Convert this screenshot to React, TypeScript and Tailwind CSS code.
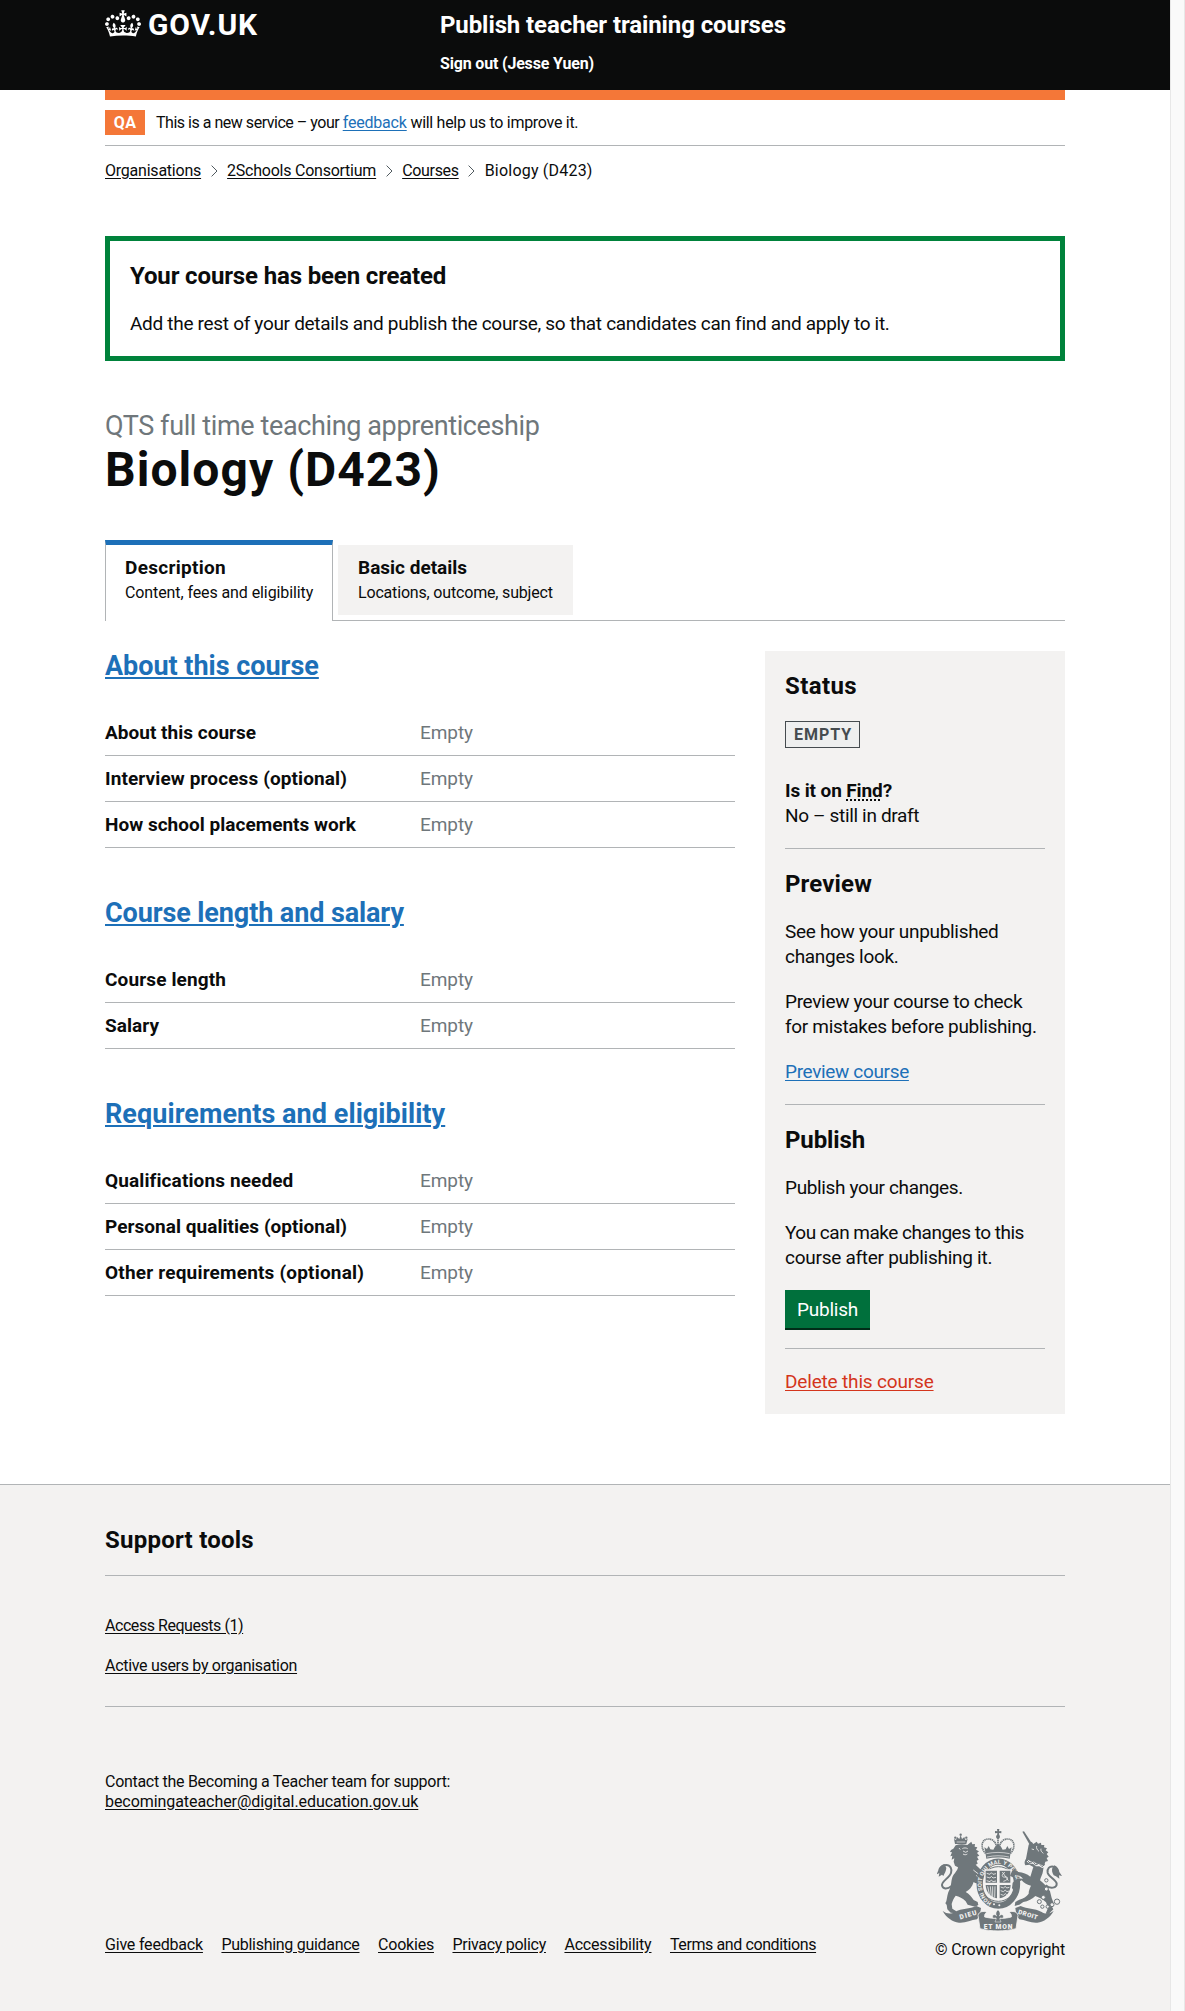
import type { ReactNode } from "react";

const INK = "#6f777b";

function CrownLogo() {
  return (
    <svg viewBox="0 0 132 97" className="h-[27px] w-9 shrink-0" fill="currentColor" aria-hidden="true">
      <path
        fillRule="evenodd"
        d="M25 30.2c3.5 1.5 7.7-.2 9.1-3.7 1.5-3.6-.2-7.8-3.9-9.2-3.6-1.4-7.6.3-9.1 3.9-1.4 3.5.3 7.5 3.9 9zM9 39.5c3.6 1.5 7.8-.2 9.2-3.7 1.5-3.6-.2-7.8-3.9-9.1-3.6-1.5-7.6.2-9.1 3.8-1.4 3.5.3 7.5 3.8 9zM4.4 57.2c3.5 1.5 7.7-.2 9.1-3.8 1.5-3.6-.2-7.7-3.9-9.1-3.5-1.5-7.6.3-9.1 3.8-1.4 3.5.3 7.6 3.9 9.1zm38.3-21.4c3.5 1.5 7.7-.2 9.1-3.8 1.5-3.6-.2-7.7-3.9-9.1-3.6-1.5-7.6.3-9.1 3.8-1.3 3.6.4 7.7 3.9 9.1zm64.4-5.6c-3.6 1.5-7.8-.2-9.1-3.7-1.5-3.6.2-7.8 3.8-9.2 3.6-1.4 7.7.3 9.2 3.9 1.3 3.5-.4 7.5-3.9 9zm15.9 9.3c-3.6 1.5-7.7-.2-9.1-3.7-1.5-3.6.2-7.8 3.7-9.1 3.6-1.5 7.7.2 9.2 3.8 1.5 3.5-.3 7.5-3.8 9zm4.7 17.7c-3.6 1.5-7.8-.2-9.2-3.8-1.5-3.6.2-7.7 3.9-9.1 3.6-1.5 7.7.3 9.2 3.8 1.3 3.5-.4 7.6-3.9 9.1zM89.3 35.8c-3.6 1.5-7.8-.2-9.2-3.8-1.4-3.6.2-7.7 3.9-9.1 3.6-1.5 7.7.3 9.2 3.8 1.4 3.6-.3 7.7-3.9 9.1zM69.7 17.7l8.9 4.7V9.3l-8.9 2.8c-.2-.3-.5-.6-.9-.9L72.4 0H59.6l3.5 11.2c-.3.3-.6.5-.9.9l-8.8-2.8v13.1l8.8-4.7c.3.3.6.7.9.9l-5 15.4v.1c-.2.8-.4 1.6-.4 2.4 0 4.1 3.1 7.5 7 8.1h.2c.3 0 .7.1 1 .1.4 0 .7 0 1-.1h.2c4-.6 7.1-4.1 7.1-8.1 0-.8-.1-1.7-.4-2.4V34l-5.1-15.4c.4-.2.7-.6 1-.9zM66 92.8c16.9 0 32.8 1.1 47.1 3.2 4-16.9 8.9-26.7 14-33.5l-9.6-3.4c1 4.9 1.1 7.2 0 10.2-1.5-1.4-3-4.3-4.2-8.7L108.6 76c2.8-2 5-3.2 7.5-3.3-4.4 9.4-10 11.9-13.6 11.2-4.3-.8-6.3-4.6-5.6-7.9 1-4.7 5.7-5.9 8-.5 4.3-8.7-3-11.4-7.6-8.8 7.1-7.2 7.9-13.5 2.1-21.1-8 6.1-8.1 12.3-4.5 20.8-4.7-5.4-12.1-2.5-9.5 6.2 3.4-5.2 7.9-2 7.2 3.1-.6 4.3-6.4 7.8-13.5 7.2-10.3-.9-10.9-8-11.2-13.8 2.5-.5 7.1 1.8 11 7.3L80.2 60c-4.1 4.4-8 5.3-12.3 5.4 1.4-4.4 8-11.6 8-11.6H55.5s6.4 7.2 7.9 11.6c-4.2-.1-8-1-12.3-5.4l1.4 16.4c3.9-5.5 8.5-7.7 10.9-7.3-.3 5.8-.9 12.8-11.1 13.8-7.2.6-12.9-2.9-13.5-7.2-.7-5 3.8-8.3 7.1-3.1 2.7-8.7-4.6-11.6-9.4-6.2 3.7-8.5 3.6-14.7-4.6-20.8-5.8 7.6-5 13.9 2.2 21.1-4.7-2.6-11.9.1-7.7 8.8 2.3-5.5 7.1-4.2 8.1.5.7 3.3-1.3 7.1-5.7 7.9-3.5.7-9-1.8-13.5-11.2 2.5.1 4.7 1.3 7.5 3.3l-4.7-15.4c-1.2 4.4-2.7 7.2-4.3 8.7-1.1-3-.9-5.3 0-10.2l-9.5 3.4c5 6.9 9.9 16.7 14 33.5 14.8-2.1 30.8-3.2 47.7-3.2z"
      />
    </svg>
  );
}

function Crest() {
  const paper = "#f3f2f1";
  return (
    <svg viewBox="66 57 375 306" className="h-[102px] w-[125px]" fill={INK} aria-hidden="true">
      {/* lion's crown */}
      <path d="M120 102l-3-15 6 3 3-9 7 6 4-12 4 12 7-6 3 9 7-3-4 15z" />
      <circle cx="137" cy="74" r="3.5" />
      <circle cx="121" cy="83" r="3.5" />
      <circle cx="154" cy="83" r="3.5" />
      <path d="M125 96h26" stroke={paper} strokeWidth="2" />
      {/* lion's head, mane and body */}
      <path d="M122 106c10-4 24-4 35-1l12-10 3 8 8-1-1 8 8 2-4 7 9 5-6 5 7 8-7 3 5 9-6 3 3 9-6 3 14 14 12 10-4 10-14-5 2 8 14 18-4 8-14-8c-4 2-8 0-12-3-5 15-13 24-24 30 10 5 18 16 24 24l12 6 2 9-10 5-22-6-6-10c-8-9-20-15-30-17-6 8-10 16-12 25l2 14 12 8-1 6-16-2-10-10-2-14c-5-2-4-6-1-10 3-12 3-24 10-36 5-10 4-24 8-36 5-12 15-18 17-30l-9-5-4-12 2-10-8 4 2-12-6 2 5-12-6-1c2-6 6-9 10-10z" />
      <path d="M142 116c5-3 11-3 16 0M144 123l8 4 7-4M132 114l4 5M144 132c4 3 9 3 13 0M175 180l18 14M184 196l12 14" stroke={paper} strokeWidth="2.5" fill="none" />
      {/* lion's tail */}
      <path
        d="M110 228c-14 11-27 9-29-2-2-12 22-22 27-37 4-12-2-24-14-24-9 0-16 6-18 13"
        fill="none"
        stroke={INK}
        strokeWidth="6"
      />
      <path d="M89 163c-10 2-18 10-19 18l-5 12 8-4-2 11 10-6 4 4c4-8 8-14 9-24z" />
      {/* imperial crown */}
      <path d="M246 57h7l-1 7 7-1v7l-7-1 1 8h-7l1-8-7 1v-7l7 1z" />
      <circle cx="249" cy="80" r="6" />
      <path
        d="M212 130c-16-14-14-42 6-43 14-1 24 8 27 24M286 130c16-14 14-42-6-43-14-1-24 8-27 24M249 84v42"
        fill="none"
        stroke={INK}
        strokeWidth="5"
        strokeDasharray="4 1.6"
      />
      <path d="M211 126l-3-14 8 5 5-9 5 10 9 1 5-9 9-8 9 8 5 9 9-1 5-10 5 9 8-5-3 14-3 20c-22-5-48-5-70 0z" />
      <path d="M214 131c23-5 47-5 70 0M216 141c22-5 44-5 66 0" fill="none" stroke={paper} strokeWidth="2" />
      {/* garter and shield */}
      <circle cx="250" cy="222" r="52" fill={paper} stroke={INK} strokeWidth="3" />
      <ellipse cx="250" cy="221" rx="56" ry="66" fill="none" stroke={INK} strokeWidth="19" />
      <path id="garter" d="M232 279A52 61 0 1 1 272 279" fill="none" />
      <text fontFamily="Roboto" fontWeight="700" fontSize="17" fill={paper} letterSpacing="0.4">
        <textPath href="#garter" startOffset="2">HONI SOIT QUI MAL Y PENSE</textPath>
      </text>
      <circle cx="237" cy="283" r="3" fill={paper} />
      <circle cx="253" cy="286" r="3" fill={paper} />
      <path d="M208 178h83v44c0 27-16 44-41 49-26-5-42-22-42-49z" fill={paper} />
      <path d="M212 182h34v36h-34zM254 182h32v36h-32zM212 225h34v40c-20-4-33-18-34-40zM254 225h33c-1 22-13 36-33 40z" />
      <path d="M215 190l10 3 4-5 5 5 9-2M215 201l10 3 4-5 5 5 9-2M215 212l10 3 4-5 5 5 9-2M257 231l8 3 6-5 4 5 8-2M257 242l8 3 6-5 4 5 8-2M257 253l8 3 6-5 4 3M270 187c-12 6-10 16 0 14 12-2 10 10-5 13M262 186l18 26M218 229l6 28M226 229l3 32M233 229v34M240 229l-1 34" fill="none" stroke={paper} strokeWidth="2.4" />
      {/* unicorn */}
      <path d="M322 65l5-1 25 38-7 4z" />
      <path d="M341 104l9-9 5 7 10-7 4 6 9-3 1 7 9 0-1 7 9 3-4 6 8 6-5 5 6 8-6 4 4 9-8 2c-2 8-6 17-7 28-1 10-7 18-9 28 12 9 22 20 30 33l5 20 6 16-5 10 4 8-14 14-9-1 7-18-6-16c-9-9-20-15-32-19-8 9-22 16-36 18l-12 8-14 4 2-12 12-7c12-3 22-9 28-18 0-9 3-16 7-24-13-3-22-9-28-16l-12 6-8 12 6 12-7 6-8-13 2-16 15-13 16 1c-5-7-15-12-23-12l-8 8-8-5 6-14 9-4 10 7c14 1 26 6 36 14 4-12 6-20 9-29l-12-7-12 2c-4-7-2-14 2-20z" />
      <path d="M337 152l10 6 8 0 9 7 9 0 9 5 10-3" stroke={paper} strokeWidth="7" fill="none" />
      <path d="M336 150l9 9 9-5 8 11 10-5 9 10 9-7" stroke={INK} strokeWidth="3" fill="none" />
      <path d="M350 117l7 2M365 108c-2 7 2 12 7 16M378 116c-2 6 2 10 7 14" stroke={paper} strokeWidth="2.5" fill="none" />
      <path
        d="M392 226c14 12 34 8 33-5-1-12-24-20-27-33-2-12 5-20 17-18 9 2 13 10 14 18"
        fill="none"
        stroke={INK}
        strokeWidth="6"
      />
      <path d="M418 166c10 4 14 13 15 20l8 12-9-2 1 10-10-7-7-3c-5-8-6-16-4-22z" />
      <g fill={paper} stroke={INK} strokeWidth="3">
        <circle cx="394" cy="211" r="5" />
        <circle cx="394" cy="237" r="6" />
        <circle cx="385" cy="262" r="6" />
        <circle cx="373" cy="275" r="6" />
        <circle cx="382" cy="290" r="5" />
        <circle cx="398" cy="290" r="5" />
        <circle cx="411" cy="284" r="6" />
        <circle cx="426" cy="275" r="8" />
      </g>
      {/* motto ribbon */}
      <path d="M83 303c12 9 25 10 36 3 22-12 45-8 65-18l14 6c-2 14-4 26-12 34-18 2-36 12-54 10-20-3-37-14-49-35z" />
      <path d="M416 303c-12 9-25 10-36 3-22-12-43-8-63-18l-16 6c2 14 4 26 12 34 18 2 36 12 54 10 20-3 37-14 49-35z" />
      <path d="M189 316c2-12 18-14 27-9-6 3-8 8-7 14 26 6 56 6 80 0 1-6-1-11-7-14 9-5 25-3 27 9l-6 40c-34 9-74 9-108 0z" stroke={paper} strokeWidth="2.5" />
      <g fontFamily="Roboto" fontWeight="900" fontSize="20" fill={paper} textAnchor="middle">
        <text transform="translate(161 321) rotate(-16)" textLength="52">DIEU</text>
        <text x="249" y="356" textLength="86">ET MON</text>
        <text transform="translate(337 320) rotate(17)" fontSize="19" textLength="60">DROIT</text>
      </g>
      {/* fleur-de-lis */}
      <path d="M249 299c7 7 8 12 4 19 6-7 13-4 12 2 0 5-5 6-8 3l-3 3 4 10h-18l4-10-3-3c-3 3-8 2-8-3-1-6 6-9 12-2-4-7-3-12 4-19z" stroke={paper} strokeWidth="1.5" />
    </svg>
  );
}

function Chevron() {
  return (
    <svg viewBox="0 0 7 12" className="h-3 w-[7px]" fill="none" stroke="#505a5f" aria-hidden="true">
      <path d="M.6.6 6 6 .6 11.4" />
    </svg>
  );
}

function Rule() {
  return <hr className="my-5 border-t border-[#b1b4b6]" />;
}

type Row = { label: string; tracking: string };

function Section({ title, tracking, rows }: { title: string; tracking: string; rows: Row[] }) {
  return (
    <section className="mb-[50px]">
      <h2 className="mb-[29px] text-[27px] leading-[30px] font-bold text-[#1d70b8]">
        <a className={`underline decoration-2 underline-offset-[2px] ${tracking}`}>{title}</a>
      </h2>
      <dl>
        {rows.map((r) => (
          <div key={r.label} className="grid grid-cols-2 border-b border-[#b1b4b6] py-2.5">
            <dt className={`font-bold ${r.tracking}`}>{r.label}</dt>
            <dd className="tracking-[-0.004em] text-[#6f777b]">Empty</dd>
          </div>
        ))}
      </dl>
    </section>
  );
}

const SECTIONS: { title: string; tracking: string; rows: Row[] }[] = [
  {
    title: "About this course",
    tracking: "tracking-[-0.001em]",
    rows: [
      { label: "About this course", tracking: "tracking-[0.001em]" },
      { label: "Interview process (optional)", tracking: "tracking-[0.006em]" },
      { label: "How school placements work", tracking: "tracking-[0.001em]" },
    ],
  },
  {
    title: "Course length and salary",
    tracking: "tracking-[-0.004em]",
    rows: [
      { label: "Course length", tracking: "tracking-[0.007em]" },
      { label: "Salary", tracking: "tracking-[0.002em]" },
    ],
  },
  {
    title: "Requirements and eligibility",
    tracking: "tracking-[0.002em]",
    rows: [
      { label: "Qualifications needed", tracking: "tracking-[0.006em]" },
      { label: "Personal qualities (optional)", tracking: "tracking-[0.002em]" },
      { label: "Other requirements (optional)", tracking: "tracking-[0.010em]" },
    ],
  },
];

const FOOTER_LINKS = [
  { label: "Give feedback", tracking: "tracking-[-0.012em]" },
  { label: "Publishing guidance", tracking: "tracking-[-0.018em]" },
  { label: "Cookies", tracking: "tracking-[-0.013em]" },
  { label: "Privacy policy", tracking: "tracking-[-0.018em]" },
  { label: "Accessibility", tracking: "tracking-[-0.012em]" },
  { label: "Terms and conditions", tracking: "tracking-[-0.025em]" },
];

function Container({ children, className = "" }: { children: ReactNode; className?: string }) {
  return <div className={`mx-auto w-[960px] ${className}`}>{children}</div>;
}

function SideHeading({ children, tracking }: { children: ReactNode; tracking: string }) {
  return <h2 className={`mb-5 text-2xl leading-[30px] font-bold ${tracking}`}>{children}</h2>;
}

export default function App() {
  return (
    <div className="flex h-[2011px] bg-white font-['Roboto',sans-serif] text-[19px] leading-[25px] text-[#0b0c0c]">
      <div className="flex w-[1170px] shrink-0 flex-col">
        <header className="h-[90px] bg-[#0b0c0c] text-white">
          <Container className="flex pt-2.5">
            <div className="flex w-[335px] items-start gap-[7px]">
              <CrownLogo />
              <span className="text-[30px] leading-[30px] font-bold tracking-[0.029em]">GOV.UK</span>
            </div>
            <div className="font-bold">
              <div className="text-2xl leading-[30px] tracking-[-0.004em]">Publish teacher training courses</div>
              <a className="mt-3.5 block text-base leading-5 tracking-[-0.011em]">Sign out (Jesse Yuen)</a>
            </div>
          </Container>
        </header>

        <Container>
          <div className="h-2.5 bg-[#f47738]" />
          <div className="flex border-b border-[#b1b4b6] py-2.5 text-base leading-[25px]">
            <strong className="mr-[11px] w-10 bg-[#f47738] text-center font-bold tracking-[0.03em] text-white">QA</strong>
            <p className="whitespace-pre">
              <span className="tracking-[-0.030em]">This is a new service – your </span>
              <a className="tracking-[-0.012em] text-[#1d70b8] underline underline-offset-2">feedback</a>
              <span className="tracking-[-0.018em]"> will help us to improve it.</span>
            </p>
          </div>
          <nav className="mt-[15px] flex items-center gap-[9.5px] text-base leading-5">
            <a className="tracking-[-0.014em] underline underline-offset-2">Organisations</a>
            <Chevron />
            <a className="tracking-[-0.015em] underline underline-offset-2">2Schools Consortium</a>
            <Chevron />
            <a className="tracking-[-0.020em] underline underline-offset-2">Courses</a>
            <Chevron />
            <span className="tracking-[0.013em]">Biology (D423)</span>
          </nav>

          <div className="mt-[55px] border-5 border-[#00823b] p-5">
            <h2 className="mb-5 text-2xl leading-[30px] font-bold tracking-[-0.006em]">Your course has been created</h2>
            <p className="tracking-[-0.016em]">
              Add the rest of your details and publish the course, so that candidates can find and apply to it.
            </p>
          </div>

          <h1 className="mt-[50px]">
            <span className="block text-[27px] leading-[30px] tracking-[-0.014em] text-[#6f777b]">
              QTS full time teaching apprenticeship
            </span>
            <span className="block text-5xl leading-[57px] font-bold tracking-[0.022em]">Biology (D423)</span>
          </h1>

          <div className="mt-[42px] flex items-start gap-[5px] border-b border-[#b1b4b6]">
            <a className="-mb-px h-[81px] w-[228px] border-x border-t-5 border-x-[#b1b4b6] border-t-[#1d70b8] bg-white pt-2.5 pl-[19px]">
              <strong className="block font-bold tracking-[0.015em]">Description</strong>
              <span className="mt-[3px] block text-base leading-5 tracking-[-0.006em]">Content, fees and eligibility</span>
            </a>
            <a className="mt-[5px] h-[70px] w-[235px] bg-[#f3f2f1] pt-2.5 pl-5">
              <strong className="block font-bold">Basic details</strong>
              <span className="mt-[3px] block text-base leading-5 tracking-[-0.011em]">Locations, outcome, subject</span>
            </a>
          </div>

          <div className="mt-[30px] flex items-start gap-[30px]">
            <main className="w-[630px]">
              {SECTIONS.map((s) => (
                <Section key={s.title} {...s} />
              ))}
            </main>

            <aside className="w-[300px] bg-[#f3f2f1] p-5">
              <SideHeading tracking="tracking-[0.016em]">Status</SideHeading>
              <div className="flex">
                <strong className="flex h-[27px] w-[75px] items-center justify-center border border-[#454b4f] bg-[#eeefef] pl-px text-base leading-4 font-bold tracking-[0.059em] text-[#454b4f]">
                  EMPTY
                </strong>
              </div>
              <div className="mt-[30px]">
                <strong className="block font-bold tracking-[-0.006em]">
                  Is it on{" "}
                  <abbr className="no-underline">
                    <span className="underline decoration-dotted decoration-[2px] underline-offset-2">Find</span>
                  </abbr>
                  ?
                </strong>
                <span className="block tracking-[-0.018em]">No – still in draft</span>
              </div>
              <Rule />
              <SideHeading tracking="tracking-[0.006em]">Preview</SideHeading>
              <p className="tracking-[-0.016em]">
                See how your unpublished
                <br />
                changes look.
              </p>
              <p className="mt-5 tracking-[-0.017em]">
                Preview your course to check
                <br />
                for mistakes before publishing.
              </p>
              <p className="mt-5 tracking-[-0.018em]">
                <a className="text-[#1d70b8] underline underline-offset-2">Preview course</a>
              </p>
              <Rule />
              <SideHeading tracking="tracking-[-0.005em]">Publish</SideHeading>
              <p className="tracking-[-0.019em]">Publish your changes.</p>
              <p className="mt-5">
                <span className="block tracking-[-0.026em]">You can make changes to this</span>
                <span className="block tracking-[-0.014em]">course after publishing it.</span>
              </p>
              <button className="mt-5 -mb-0.5 block h-10 w-[85px] border-b-2 border-[#002d18] bg-[#00703c] tracking-[-0.012em] text-white">
                Publish
              </button>
              <Rule />
              <a className="block tracking-[-0.009em] text-[#d4351c] underline underline-offset-2">Delete this course</a>
            </aside>
          </div>
        </Container>

        <footer className="mt-[70px] flex-1 border-t border-[#b1b4b6] bg-[#f3f2f1] pt-10 text-base leading-5">
          <Container>
            <h2 className="text-2xl leading-[30px] font-bold tracking-[0.010em]">Support tools</h2>
            <Rule />
            <ul className="mt-10 flex flex-col gap-5">
              <li>
                <a className="tracking-[-0.028em] underline underline-offset-2">Access Requests (1)</a>
              </li>
              <li>
                <a className="tracking-[-0.019em] underline underline-offset-2">Active users by organisation</a>
              </li>
            </ul>
            <hr className="mt-[30px] border-t border-[#b1b4b6]" />
            <p className="mt-[65px]">
              <span className="block tracking-[-0.018em]">Contact the Becoming a Teacher team for support:</span>
              <a className="tracking-[-0.004em] underline underline-offset-2">becomingateacher@digital.education.gov.uk</a>
            </p>
            <div className="mt-[17px] flex items-end justify-between">
              <ul className="mb-[5px] flex gap-[18.5px]">
                {FOOTER_LINKS.map((l) => (
                  <li key={l.label}>
                    <a className={`underline underline-offset-2 ${l.tracking}`}>{l.label}</a>
                  </li>
                ))}
              </ul>
              <div className="flex flex-col items-center gap-[9px]">
                <Crest />
                <span className="tracking-[-0.009em]">© Crown copyright</span>
              </div>
            </div>
          </Container>
        </footer>
      </div>
      <div className="flex-1 border-x border-[#e8e8e8] bg-[#fafafa]" />
    </div>
  );
}
